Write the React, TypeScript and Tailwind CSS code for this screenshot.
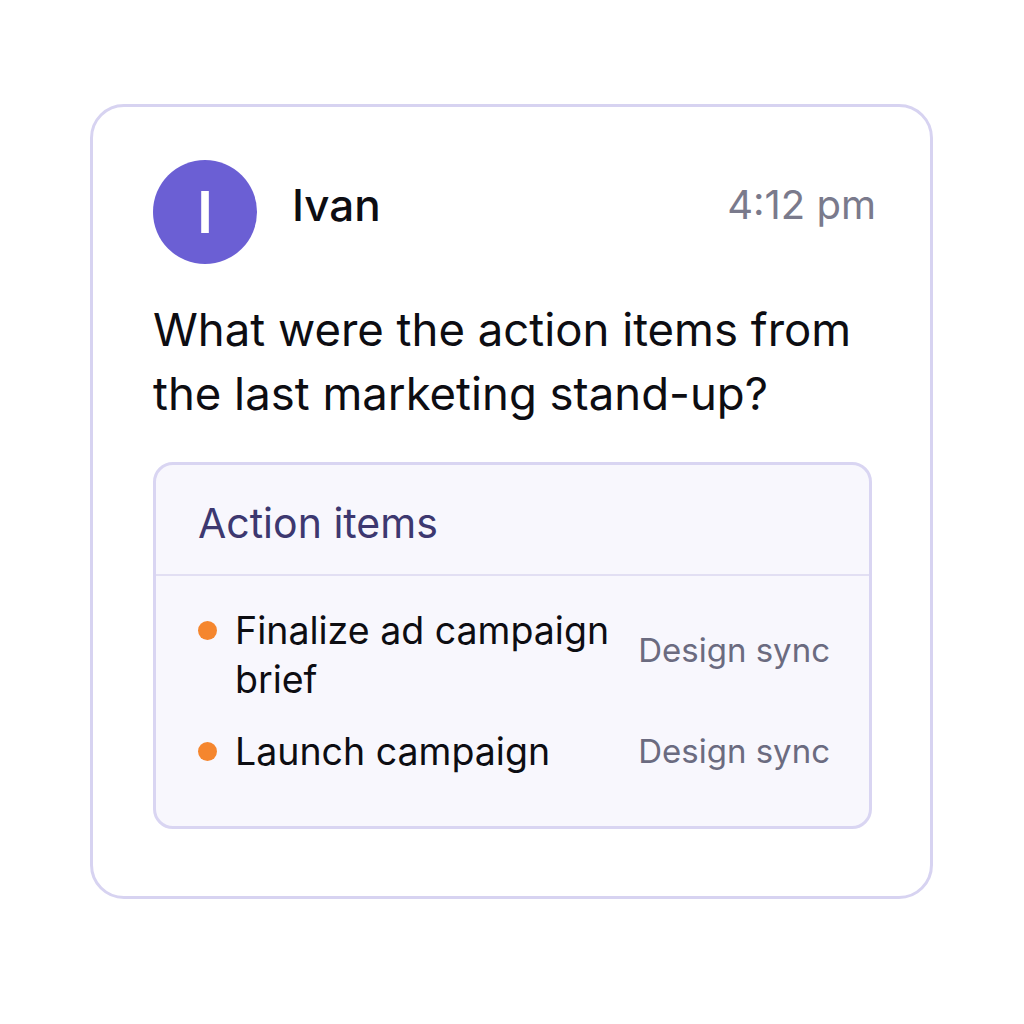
export default function App() {
  return (
    <div className="min-h-screen bg-white pt-[104px] pl-[90px]" style={{ fontFamily: 'Inter, "Noto Sans", sans-serif' }}>
      <div className="w-[843px] h-[795px] rounded-[34px] border-[3px] border-[#d7d3f1] bg-white px-[60px] pt-[53px]">
        {/* header */}
        <div className="flex items-center">
          <div className="w-[104px] h-[104px] rounded-full bg-[#6b5fd4] flex items-center justify-center text-white text-[58px] font-semibold leading-none">
            I
          </div>
          <div className="ml-[35px] mb-[14px] text-[44px] font-medium text-[#0d0d12]">Ivan</div>
          <div className="ml-auto mr-[-6px] mb-[14px] text-[40px] text-[#7a7a8c]">4:12 pm</div>
        </div>

        <p className="mt-[34px] text-[45.5px] leading-[64px] text-[#0d0d12]">
          What were the action items from the last marketing stand-up?
        </p>

        {/* action items card */}
        <div className="mt-[36px] w-[719px] rounded-[20px] border-[3px] border-[#d9d5f2] bg-[#f8f7fd]">
          <div className="h-[111px] flex items-center pl-[42px] pt-[9px] border-b-2 border-[#e2dff3] text-[41px] text-[#3d3870]">
            Action items
          </div>
          <div className="pl-[42px] pr-[39px] pt-[30px] pb-[49px] flex flex-col gap-[23px]">
            <div className="flex items-center">
              <div className="flex items-start flex-1">
                <span className="mt-[15px] w-[19px] h-[19px] rounded-full bg-[#f5862e] shrink-0" />
                <span className="ml-[18px] w-[390px] text-[37.5px] leading-[49px] text-[#0d0d12]">
                  Finalize ad campaign brief
                </span>
              </div>
              <span className="mb-[8px] text-[33px] text-[#6b6b80]">Design sync</span>
            </div>
            <div className="flex items-center">
              <div className="flex items-start flex-1">
                <span className="mt-[15px] w-[19px] h-[19px] rounded-full bg-[#f5862e] shrink-0" />
                <span className="ml-[18px] text-[37.5px] leading-[49px] text-[#0d0d12]">Launch campaign</span>
              </div>
              <span className="text-[33px] text-[#6b6b80]">Design sync</span>
            </div>
          </div>
        </div>
      </div>
    </div>
  );
}
